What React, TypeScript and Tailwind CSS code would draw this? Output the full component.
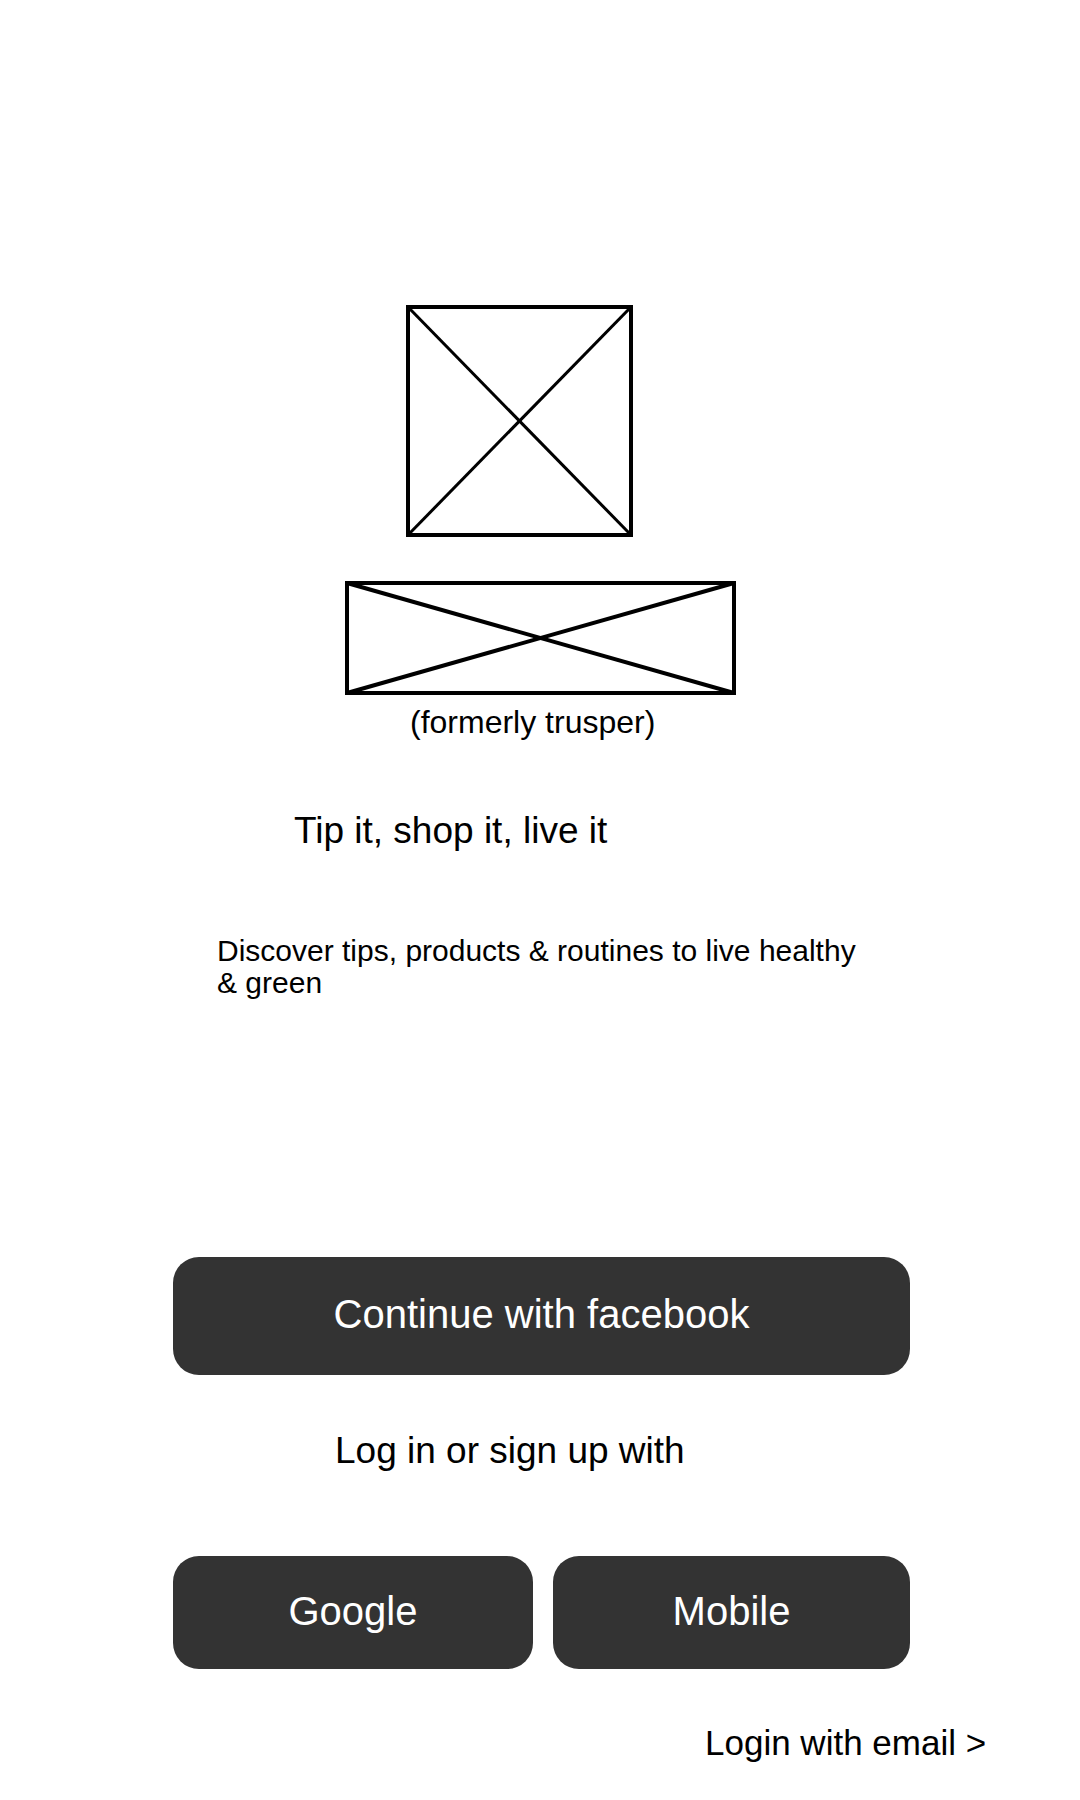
import React from 'react'

const font = { fontFamily: '"Liberation Sans", Arial, sans-serif' }

const Placeholder: React.FC<{ w: number; h: number; line: number }> = ({ w, h, line }) => (
  <svg width={w} height={h} viewBox={`0 0 ${w} ${h}`} className="block">
    <rect x={2} y={2} width={w - 4} height={h - 4} fill="none" stroke="#000" strokeWidth={4} />
    <line x1={2} y1={2} x2={w - 2} y2={h - 2} stroke="#000" strokeWidth={line} />
    <line x1={w - 2} y1={2} x2={2} y2={h - 2} stroke="#000" strokeWidth={line} />
  </svg>
)

const DarkButton: React.FC<{ label: string; className: string }> = ({ label, className }) => (
  <button
    className={`flex items-center justify-center pb-[4px] bg-[#333333] text-white text-[40px] leading-[40px] ${className}`}
  >
    {label}
  </button>
)

export default function App() {
  return (
    <div className="w-[1080px] h-[1800px] bg-white text-black flex flex-col pt-[305px]" style={font}>
      <div className="ml-[406px]">
        <Placeholder w={227} h={232} line={3} />
      </div>

      <div className="ml-[345px] mt-[44px]">
        <Placeholder w={391} h={114} line={4} />
      </div>

      <p className="mt-[11px] pl-[410px] text-[32px] leading-[32px]">(formerly trusper)</p>

      <h1 className="mt-[74px] pl-[294px] text-[37px] leading-[37px]">Tip it, shop it, live it</h1>

      <p className="mt-[86px] ml-[217px] w-[650px] text-[30px] leading-[32px]">
        Discover tips, products &amp; routines to live healthy &amp; green
      </p>

      <DarkButton label="Continue with facebook" className="mt-[258px] ml-[173px] w-[737px] h-[118px] rounded-[26px]" />

      <p className="mt-[57px] pl-[335px] text-[37px] leading-[37px]">Log in or sign up with</p>

      <div className="mt-[87px] ml-[173px] w-[737px] flex gap-[20px]">
        <DarkButton label="Google" className="w-[360px] h-[113px] rounded-[26px]" />
        <DarkButton label="Mobile" className="w-[357px] h-[113px] rounded-[26px]" />
      </div>

      <p className="mt-[56px] pl-[705px] text-[35px] leading-[35px]">Login with email &gt;</p>
    </div>
  )
}
